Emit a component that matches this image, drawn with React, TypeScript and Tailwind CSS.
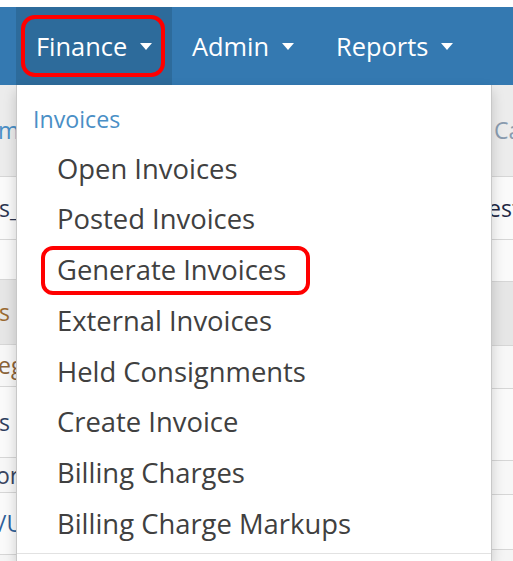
import React from "react";

const font = { fontFamily: '"Open Sans", "Noto Sans", sans-serif' };

function Caret() {
  return (
    <span className="ml-[13px] inline-block h-0 w-0 border-l-[6px] border-r-[6px] border-t-[7px] border-l-transparent border-r-transparent border-t-white" />
  );
}

const items = [
  "Open Invoices",
  "Posted Invoices",
  "Generate Invoices",
  "External Invoices",
  "Held Consignments",
  "Create Invoice",
  "Billing Charges",
  "Billing Charge Markups",
];

type Row = { h: string; bg: string; text?: string; color?: string; off?: string };

const leftRows: Row[] = [
  { h: "h-[92px]", bg: "bg-[#ececec]", text: "m", color: "text-[#4a8fc6]", off: "ml-[-2px]" },
  { h: "h-[63px]", bg: "bg-[#fafafa]", text: "s_", color: "text-[#2a3550]", off: "ml-[-1px]" },
  { h: "h-[40px]", bg: "bg-[#fafafa]" },
  { h: "h-[65px]", bg: "bg-[#e6e6e6]", text: "s l", color: "text-[#9a6a30]", off: "ml-[-1px]" },
  { h: "h-[42px]", bg: "bg-[#f7f7f7]", text: "eg", color: "text-[#8a6238]", off: "ml-[-2px]" },
  { h: "h-[71px]", bg: "bg-[#fafafa]", text: "s", color: "text-[#2d3e5e]", off: "ml-[-1px]" },
  { h: "h-[35px]", bg: "bg-[#f7f7f7]", text: "or", color: "text-[#3a4560]", off: "ml-[-4px]" },
  { h: "h-[62px]", bg: "bg-[#fafafa]", text: "/U", color: "text-[#2f5f99]", off: "ml-[-2px]" },
  { h: "h-[20px]", bg: "bg-[#f5f5f5]" },
];

const rightRows: Row[] = [
  { h: "h-[92px]", bg: "bg-[#ececec]", text: "Ca", color: "text-[#8a9cb0]", off: "ml-[2px]" },
  { h: "h-[63px]", bg: "bg-[#fafafa]", text: "est", color: "text-[#1f2944]", off: "ml-[-4px]" },
  { h: "h-[42px]", bg: "bg-[#fafafa]" },
  { h: "h-[64px]", bg: "bg-[#e6e6e6]" },
  { h: "h-[43px]", bg: "bg-[#f7f7f7]" },
  { h: "h-[72px]", bg: "bg-[#fafafa]" },
  { h: "h-[34px]", bg: "bg-[#f7f7f7]" },
  { h: "h-[55px]", bg: "bg-[#fafafa]" },
  { h: "h-[20px]", bg: "bg-[#f5f5f5]" },
];

function Strip({ rows, width }: { rows: Row[]; width: string }) {
  return (
    <div className={`${width} flex flex-col overflow-hidden`}>
      {rows.map((r, i) => (
        <div
          key={i}
          className={`${r.h} ${r.bg} flex shrink-0 items-center overflow-hidden whitespace-nowrap border-b border-[#d6d6d6] text-[23px] ${r.color ?? ""}`}
        >
          {r.text ? <span className={r.off}>{r.text}</span> : null}
        </div>
      ))}
    </div>
  );
}

export default function App() {
  return (
    <div className="relative flex h-[561px] w-[513px] flex-col overflow-hidden bg-white" style={font}>
      <div className="h-[7px] shrink-0 bg-white" />
      <nav className="flex h-[78px] shrink-0 items-stretch bg-[#3479b1] text-[25.4px] text-white">
        <div className="w-[16px]" />
        <div className="relative flex w-[156px] items-center bg-[#2d6b9b] pl-[20px]">
          <span>Finance</span>
          <Caret />
          <div className="absolute bottom-[8px] left-[5px] right-[7px] top-[8px] rounded-[14px] border-[4px] border-[#ff0000]" />
        </div>
        <div className="flex items-center px-[20px]">
          <span>Admin</span>
          <Caret />
        </div>
        <div className="flex items-center px-[22px]">
          <span>Reports</span>
          <Caret />
        </div>
      </nav>
      <div className="flex min-h-0 flex-1">
        <Strip rows={leftRows} width="w-[16px]" />
        <div className="relative z-10 flex w-[476px] shrink-0 flex-col border-x border-[#c8c8c8] bg-white shadow-[0_6px_12px_rgba(0,0,0,0.18)]">
          <div className="mt-[11px] flex h-[47px] shrink-0 items-center pl-[16px] text-[23.2px] text-[#4a8fc6]">
            Invoices
          </div>
          {items.map((t) => (
            <div
              key={t}
              className="relative flex h-[50.7px] shrink-0 items-center pl-[40px] text-[27.4px] text-[#404040]"
            >
              <span>{t}</span>
              {t === "Generate Invoices" ? (
                <div className="absolute left-[24px] top-[2px] h-[49px] w-[269px] rounded-[12px] border-[4px] border-[#ff0000]" />
              ) : null}
            </div>
          ))}
          <div className="mt-[4px] border-t border-[#e2e2e2]" />
        </div>
        <Strip rows={rightRows} width="flex-1" />
      </div>
    </div>
  );
}
